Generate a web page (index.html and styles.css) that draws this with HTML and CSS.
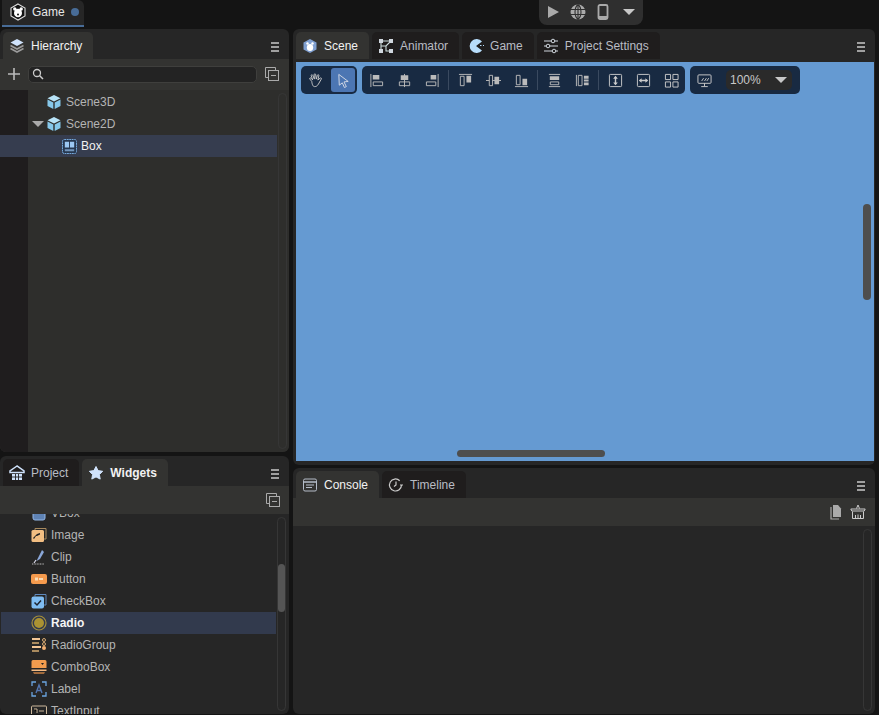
FILE: index.html
```html
<!DOCTYPE html>
<html lang="en">
<head>
  <meta charset="UTF-8" />
  <meta name="viewport" content="width=device-width, initial-scale=1.0"/>
  <title>Game</title>
  <link rel="stylesheet" href="styles.css">
</head>
<body>
  <div class="topbar">
    <div class="doc-tab">
      <svg class="ic18" viewBox="0 0 18 18"><path d="M9 1l7 4v8l-7 4-7-4V5z" fill="#111" stroke="#ddd" stroke-width="1.1"/><circle cx="5.8" cy="6" r="1.7" fill="#fff"/><circle cx="12.2" cy="6" r="1.7" fill="#fff"/><ellipse cx="9" cy="10" rx="4" ry="4.3" fill="#fff"/><circle cx="9" cy="11.5" r="1" fill="#111"/></svg>
      <span>Game</span>
      <i class="dot"></i>
    </div>
    <div class="run-group">
      <svg class="ic16" viewBox="0 0 16 16"><path d="M3 2l11 6-11 6z" fill="#aaa"/></svg>
      <svg class="ic16" viewBox="0 0 16 16"><circle cx="8" cy="8" r="7.5" fill="#aaa"/><path d="M0 5.5h16M0 10.500h16M8 0v16M8 .5C4 4 4 12 8 15.500M8 .5c4 3.500 4 11.500 0 15" fill="none" stroke="#2f2f2f" stroke-width="1.100"/></svg>
      <svg class="ic16" viewBox="0 0 16 16"><rect x="3.500" y="1" width="9" height="14" rx="1.500" fill="none" stroke="#aaa" stroke-width="1.800"/><path d="M4 12h8v3H4z" fill="#aaa"/></svg>
      <i class="caret big"></i>
    </div>
  </div>

  <div class="workspace">
    <div class="col-left">
      <section class="panel hierarchy">
        <div class="tabs">
          <div class="tab active">
            <svg class="ic16" viewBox="0 0 16 16"><path d="M8 1l6.500 3.500L8 8 1.500 4.500z" fill="#cfe2fb"/><path d="M1.500 7.500L8 11l6.500-3.500M1.500 10.500L8 14l6.500-3.500" fill="none" stroke="#9a9a9a" stroke-width="1.600"/></svg>
            <span>Hierarchy</span>
          </div>
          <div class="menu"><i></i><i></i><i></i></div>
        </div>
        <div class="toolbar search-bar">
          <svg class="plus" viewBox="0 0 12 12"><path d="M6 0v12M0 6h12" stroke="#bbb" stroke-width="1.600"/></svg>
          <div class="search">
            <svg viewBox="0 0 12 12"><circle cx="5" cy="5" r="3.500" fill="none" stroke="#ccc" stroke-width="1.300"/><path d="M7.500 7.500l3.500 3.500" stroke="#ccc" stroke-width="1.500"/></svg>
          </div>
          <svg class="collapse" viewBox="0 0 14 14"><path d="M3.500 10.500H.5V.5h10v3" fill="none" stroke="#aaa"/><rect x="3.500" y="3.500" width="10" height="10" fill="none" stroke="#aaa"/><path d="M6 8.500h5" stroke="#aaa"/></svg>
        </div>
        <div class="tree">
          <div class="gutter"></div>
          <div class="tree-row"><svg class="cube" viewBox="0 0 16 16"><use href="#cube"/></svg><span>Scene3D</span></div>
          <div class="tree-row"><i class="caret small"></i><svg class="cube" viewBox="0 0 16 16"><use href="#cube"/></svg><span>Scene2D</span></div>
          <div class="tree-row selected">
            <svg class="box" viewBox="0 0 16 16"><rect x=".5" y=".5" width="15" height="15" rx="2" fill="#26374f" stroke="#7db4ea" stroke-dasharray="2 .6"/><path d="M3 3h4.500v6H3zM8.500 3H13v6H8.500z" fill="#9cc8f2"/><path d="M3 11h10v2H3z" fill="#7296bd"/></svg>
            <span>Box</span>
          </div>
          <div class="vscroll"></div>
        </div>
      </section>

      <section class="panel widgets">
        <div class="tabs">
          <div class="tab">
            <svg class="ic16" viewBox="0 0 16 16"><path d="M8 1L1 6v1.500h14V6z" fill="none" stroke="#cfe2fb" stroke-width="1.500"/><path d="M3 9h10v6H3z" fill="#cfe2fb"/><path d="M6.500 9v6M9.500 9v6M3 12h10" stroke="#222" stroke-width=".9"/></svg>
            <span>Project</span>
          </div>
          <div class="tab active bold">
            <svg class="ic16" viewBox="0 0 16 16"><path d="M8 1.500l2.100 4.100 4.600.7-3.300 3.200.8 4.600L8 11.900l-4.200 2.200.8-4.600L1.300 6.300l4.600-.7z" fill="#cfe2fb" stroke="#cfe2fb" stroke-linejoin="round"/></svg>
            <span>Widgets</span>
          </div>
          <div class="menu"><i></i><i></i><i></i></div>
        </div>
        <div class="toolbar end">
          <svg class="collapse" viewBox="0 0 14 14"><path d="M3.500 10.500H.5V.5h10v3" fill="none" stroke="#aaa"/><rect x="3.500" y="3.500" width="10" height="10" fill="none" stroke="#aaa"/><path d="M6 8.500h5" stroke="#aaa"/></svg>
        </div>
        <div class="list">
          <div class="list-inner">
            <div class="list-row"><svg class="ic16" viewBox="0 0 16 16"><rect x="2" y="1" width="12" height="14" rx="2" fill="#5f83b5" stroke="#93b7e6"/></svg><span>VBox</span></div>
            <div class="list-row"><svg class="ic16" viewBox="0 0 16 16"><path d="M4 3V1.500h11V12h-2" fill="none" stroke="#a98a5e"/><rect x=".5" y="3" width="12.500" height="12" rx="1.500" fill="#f2be82"/><path d="M2 11l4-4 3-1v1.500L6 9H5l-2 3z" fill="#222"/></svg><span>Image</span></div>
            <div class="list-row"><svg class="ic16" viewBox="0 0 16 16"><path d="M11 1l2 2-4 7-3.500 2z" fill="#8aa7d8"/><path d="M5 11l-2 3" stroke="#dde" stroke-width="1.200"/><path d="M1 15h12" stroke="#bbb" stroke-dasharray="1 .6"/></svg><span>Clip</span></div>
            <div class="list-row"><svg class="ic16" viewBox="0 0 16 16"><rect y="3" width="16" height="10" rx="2" fill="#f49a4d"/><path d="M4 6.500h3v3H4zM8 7h4v2H8z" fill="#f9dcb6"/></svg><span>Button</span></div>
            <div class="list-row"><svg class="ic16" viewBox="0 0 16 16"><path d="M4 3.500V1.500h11V12h-2" fill="none" stroke="#5e89bd"/><rect x=".5" y="3.500" width="12.500" height="12" rx="2" fill="#7fbdf2"/><path d="M3.500 9.500l2.500 2.500 4-4.500" fill="none" stroke="#1c2430" stroke-width="1.500"/></svg><span>CheckBox</span></div>
            <div class="list-row selected bold"><svg class="ic16" viewBox="0 0 16 16"><circle cx="8" cy="8" r="7" fill="none" stroke="#a48e3a" stroke-width="1.200"/><circle cx="8" cy="8" r="5" fill="#ab9232"/></svg><span>Radio</span></div>
            <div class="list-row"><svg class="ic16" viewBox="0 0 16 16"><path d="M1 1h8v2H1zM1 9h9v2H1z" fill="#f3c695"/><path d="M1 5h7v2H1zM1 13h7v2H1z" fill="#a98a5e"/><circle cx="13" cy="3" r="1.500" fill="none" stroke="#d8aa72"/><circle cx="13" cy="7" r="1.500" fill="none" stroke="#d8aa72"/><circle cx="13" cy="11" r="2" fill="#f3b071"/></svg><span>RadioGroup</span></div>
            <div class="list-row"><svg class="ic16" viewBox="0 0 16 16"><path d="M2 1h12a1.500 1.500 0 011.500 1.500V9H.5V2.500A1.500 1.500 0 012 1z" fill="#f29c4e"/><path d="M.5 10.500h15v1.500H.5z" fill="#f4bb84"/><path d="M2 13h12l-1 2H3z" fill="#a06a3c"/><path d="M10 4h3l-1.500 2z" fill="#222"/></svg><span>ComboBox</span></div>
            <div class="list-row"><svg class="ic16" viewBox="0 0 16 16"><path d="M1 5V1h4M11 1h4v4M15 11v4h-4M5 15H1v-4" fill="none" stroke="#6ba5e0" stroke-width="1.300"/><path d="M5 12l3-8 3 8M6.200 9.500h3.600" fill="none" stroke="#5476b0" stroke-width="1.400"/></svg><span>Label</span></div>
            <div class="list-row"><svg class="ic16" viewBox="0 0 16 16"><rect x=".5" y="3" width="15" height="10" rx="1" fill="none" stroke="#cdb89c"/><path d="M3 6h3v4M8 8h5" stroke="#cdb89c"/></svg><span>TextInput</span></div>
          </div>
          <div class="vscroll"><div class="thumb"></div></div>
        </div>
      </section>
    </div>

    <div class="col-right">
      <section class="panel scene">
        <div class="tabs">
          <div class="tab active">
            <svg class="ic16" viewBox="0 0 16 16"><path d="M8 1l6.500 3.500v7L8 15l-6.500-3.500v-7z" fill="#7f9fd0"/><circle cx="5.500" cy="5.500" r="1.200" fill="#fff"/><circle cx="10.500" cy="5.500" r="1.200" fill="#fff"/><ellipse cx="8" cy="9.500" rx="3.200" ry="3.500" fill="#fff"/></svg>
            <span>Scene</span>
          </div>
          <div class="tab">
            <svg class="ic16" viewBox="0 0 16 16"><path d="M3 3h10M3 3v10M13 3l-5 5H3M8 8v5h5" fill="none" stroke="#cdd" stroke-width="1.100"/><path d="M1 1h4v4H1zM11 1h4v4h-4zM1 11h4v4H1zM11 11h4v4h-4z" fill="#cfd6dd"/></svg>
            <span>Animator</span>
          </div>
          <div class="tab">
            <svg class="ic16" viewBox="0 0 16 16"><path d="M14 3.500A7 7 0 1014 12.500L8 8z" fill="#b7dcfa"/><path d="M12 7.500h1.500M15 7.500h1" stroke="#b7dcfa"/></svg>
            <span>Game</span>
          </div>
          <div class="tab">
            <svg class="ic16" viewBox="0 0 16 16"><path d="M1 3h14M1 8h14M1 13h14" stroke="#cfd6dd" stroke-width="1.200"/><circle cx="10" cy="3" r="1.800" fill="#221f1f" stroke="#cfd6dd"/><circle cx="5" cy="8" r="1.800" fill="#221f1f" stroke="#cfd6dd"/><circle cx="11" cy="13" r="1.800" fill="#221f1f" stroke="#cfd6dd"/></svg>
            <span>Project Settings</span>
          </div>
          <div class="menu"><i></i><i></i><i></i></div>
        </div>
        <div class="stage">
          <div class="stage-tools">
            <div class="tool-group">
              <button class="tool"><svg viewBox="0 0 16 16"><path d="M4 9L2 6.500c-.8-1 .5-1.800 1.200-1L5 7.500 3.500 3c-.4-1.200 1.200-1.600 1.600-.5L6.800 6.500 6.500 1.800c0-1.200 1.700-1.200 1.700 0l.6 4.700L10 2.500c.3-1.100 1.800-.8 1.600.4L10.500 7.500l2.400-2c1-.8 1.900.2 1.200 1.100L11 12c-1 1.600-2 2.500-4 2.500-1.500 0-2.500-1.500-3-5.500z" fill="none" stroke="#ccc"/></svg></button>
              <button class="tool on"><svg viewBox="0 0 16 16"><path d="M3 1.500l10 7.500-4.500.5L11 14.500l-2 1-2.300-5L3.500 13z" fill="none" stroke="#d5dbe6"/></svg></button>
            </div>
            <div class="tool-group">
              <button class="tool"><svg viewBox="0 0 16 16"><path d="M2 1v14" stroke="#bbb"/><path d="M4 2h7v5H4z" fill="#bbb"/><path d="M4.500 9.500h10v4h-10z" fill="none" stroke="#bbb"/></svg></button>
              <button class="tool"><svg viewBox="0 0 16 16"><path d="M8 1v14" stroke="#bbb"/><path d="M4 2.500h8v5H4z" fill="#bbb"/><path d="M2.500 9.500h11v4h-11z" fill="none" stroke="#bbb"/></svg></button>
              <button class="tool"><svg viewBox="0 0 16 16"><path d="M14 1v14" stroke="#bbb"/><path d="M6 2h6v5H6z" fill="#bbb"/><path d="M1.500 9.500h10v4h-10z" fill="none" stroke="#bbb"/></svg></button>
              <i class="sep"></i>
              <button class="tool"><svg viewBox="0 0 16 16"><path d="M1 1.500h14" stroke="#bbb"/><path d="M2.500 3.500h4v10h-4z" fill="none" stroke="#bbb"/><path d="M9 3h5v7H9z" fill="#bbb"/></svg></button>
              <button class="tool"><svg viewBox="0 0 16 16"><path d="M0 8h16" stroke="#bbb"/><path d="M3.500 2.500h3.500v11H3.500z" fill="#1a2a40" stroke="#bbb"/><path d="M9 4h5v8H9z" fill="#bbb"/></svg></button>
              <button class="tool"><svg viewBox="0 0 16 16"><path d="M1 14.500h14" stroke="#bbb"/><path d="M2.500 2.500h4v10h-4z" fill="none" stroke="#bbb"/><path d="M9 6h5v7H9z" fill="#bbb"/></svg></button>
              <i class="sep"></i>
              <button class="tool"><svg viewBox="0 0 16 16"><path d="M2 1.500h12M2 14.500h12" stroke="#bbb"/><path d="M3 3.500h10v4H3z" fill="#bbb"/><path d="M3.500 9.500h9v3h-9z" fill="none" stroke="#bbb"/></svg></button>
              <button class="tool"><svg viewBox="0 0 16 16"><path d="M1.500 2v12" stroke="#bbb"/><path d="M3.500 2.500h4v11h-4z" fill="none" stroke="#bbb"/><path d="M9.500 3h5v3h-5zM9.500 7h5v2h-5zM9.500 10h5v3h-5z" fill="#bbb"/></svg></button>
              <i class="sep"></i>
              <button class="tool"><svg viewBox="0 0 16 16"><rect x="1.500" y="1.500" width="13" height="13" rx="1" fill="none" stroke="#ccc"/><path d="M8 4v8" stroke="#ccc" stroke-width="1.500"/><path d="M5.500 6L8 3l2.500 3zM5.500 10L8 13l2.500-3z" fill="#ccc"/></svg></button>
              <button class="tool"><svg viewBox="0 0 16 16"><rect x="1.500" y="1.500" width="13" height="13" rx="1" fill="none" stroke="#ccc"/><path d="M4 8h8" stroke="#ccc" stroke-width="1.500"/><path d="M6 5.500L3 8l3 2.500zM10 5.500L13 8l-3 2.500z" fill="#ccc"/></svg></button>
              <button class="tool"><svg viewBox="0 0 16 16"><path d="M1.500 1.500h5.500v5.500H1.500zM9.500 1.500h5.500v5.500H9.500zM1.500 9.500h5.500v5.500H1.500zM9.500 9.500h5.500v5.500H9.500z" fill="none" stroke="#ccc"/></svg></button>
            </div>
            <div class="tool-group">
              <button class="tool"><svg viewBox="0 0 16 16"><rect x="1" y="2" width="14" height="9" rx="1" fill="none" stroke="#ccc"/><path d="M8 11v3M4.500 14.500h7M5 8.500l2-3M8 8.500l2-3M10.500 8.500l2-3" stroke="#ccc"/></svg></button>
              <div class="zoom-select"><span>100%</span><i class="caret big"></i></div>
            </div>
          </div>
          <div class="stage-vbar"></div>
          <div class="stage-hbar"></div>
        </div>
      </section>

      <section class="panel console">
        <div class="tabs">
          <div class="tab active">
            <svg class="ic16" viewBox="0 0 16 16"><rect x="1.500" y="2" width="13" height="12" rx="1.500" fill="none" stroke="#b5bcc8"/><path d="M2 5h12" stroke="#b5bcc8" stroke-width="1.600"/><path d="M4 8h8M4 10.500h6" stroke="#b5bcc8"/></svg>
            <span>Console</span>
          </div>
          <div class="tab">
            <svg class="ic16" viewBox="0 0 16 16"><path d="M13.500 8a6 6 0 11-1.800-4.300" fill="none" stroke="#ccc" stroke-width="1.200"/><path d="M8 4.500V8l-2 1.500M12 8h3" fill="none" stroke="#ccc" stroke-width="1.200"/></svg>
            <span>Timeline</span>
          </div>
          <div class="menu"><i></i><i></i><i></i></div>
        </div>
        <div class="toolbar end">
          <svg class="doc" viewBox="0 0 14 16"><path d="M2 3v12h8" fill="none" stroke="#aaa" stroke-width="1.200"/><path d="M4 1h5l3 3.500V13H4z" fill="#aaa"/></svg>
          <svg class="broom" viewBox="0 0 16 16"><path d="M6.500 4.500L8 1l1.500 3.500" fill="none" stroke="#ccc"/><path d="M.8 5h14.400l-1 2H1.800z" fill="none" stroke="#ccc"/><path d="M2.500 7.500v7h11v-7M5.500 11v3.500M8 10.500v4M10.500 11v3.500" fill="none" stroke="#ccc"/></svg>
        </div>
        <div class="console-body"><div class="vscroll"></div></div>
      </section>
    </div>
  </div>

  <svg class="defs" width="0" height="0">
    <symbol id="cube" viewBox="0 0 16 16">
      <path d="M8 1l6.500 3.300L8 7.600 1.500 4.300z" fill="#b7e3f7"/>
      <path d="M1.500 5.500L7.300 8.600V15L1.500 12z" fill="#86c8ea"/>
      <path d="M14.500 5.500L8.700 8.600V15l5.800-3z" fill="#86c8ea"/>
    </symbol>
  </svg>
</body>
</html>
```

FILE: styles.css
```css
* {
  box-sizing: border-box;
}
html, body {
  height: 100%;
}
body {
  margin: 0;
  background: #141414;
  color: #b4b4b4;
  font-family: "Liberation Sans", Arial, sans-serif;
  font-size: 12px;
  overflow: hidden;
  display: flex;
  flex-direction: column;
}
svg {
  display: block;
  flex: none;
}
.defs {
  position: absolute;
}
.ic16 {
  width: 16px;
  height: 16px;
}
.ic18 {
  width: 18px;
  height: 18px;
}

.topbar {
  height: 29px;
  flex: none;
  position: relative;
  padding-left: 2px;
}
.doc-tab {
  width: 82px;
  height: 27px;
  background: #262626;
  border-bottom: 2px solid #486c97;
  border-radius: 0 6px 0 0;
  display: flex;
  align-items: center;
  padding: 0 0 2px 7px;
  color: #e6e6e6;
}
.doc-tab span {
  margin-left: 5px;
}
.dot {
  width: 8px;
  height: 8px;
  border-radius: 50%;
  background: #486c97;
  margin-left: 6px;
}
.run-group {
  position: absolute;
  left: 539px;
  top: 0;
  width: 104px;
  height: 25px;
  background: #2f2f2f;
  border-radius: 0 0 8px 8px;
  display: flex;
  align-items: center;
  padding: 0 0 2px 6px;
  gap: 9px;
}
.caret {
  display: block;
  width: 0;
  height: 0;
  border-style: solid;
  border-color: #c8c8c8 transparent transparent;
}
.caret.big {
  border-width: 6px 6px 0;
}
.run-group .caret {
  margin-left: 3px;
}
.caret.small {
  border-width: 6px 6px 0;
  position: absolute;
  left: 32px;
  top: 8px;
  border-top-color: #aaa;
}

.workspace {
  flex: 1;
  min-height: 0;
  display: flex;
  gap: 4px;
  padding-bottom: 1px;
}
.col-left {
  width: 289px;
  flex: none;
  display: flex;
  flex-direction: column;
  gap: 4px;
}
.col-right {
  flex: 1;
  min-width: 0;
  display: flex;
  flex-direction: column;
  gap: 3px;
  padding-right: 4px;
}
.panel {
  background: #262626;
  border-radius: 6px;
  display: flex;
  flex-direction: column;
  overflow: hidden;
}
.hierarchy {
  height: 423px;
  flex: none;
}
.widgets {
  flex: 1;
  min-height: 0;
}
.scene {
  height: 436px;
  flex: none;
}
.console {
  flex: 1;
  min-height: 0;
}

.tabs {
  height: 30px;
  flex: none;
  display: flex;
  align-items: flex-end;
  padding-left: 3px;
  gap: 3px;
}
.tab {
  height: 27px;
  display: flex;
  align-items: center;
  padding: 0 11px 0 6px;
  gap: 6px;
  background: #1f1d1d;
  border-radius: 5px 5px 0 0;
  color: #b9bcc4;
}
.tab.active {
  background: #333331;
  color: #f2f2f2;
}
.tab.bold span {
  font-weight: bold;
}
.menu {
  margin: 0 10px 7px auto;
  width: 8px;
  display: flex;
  flex-direction: column;
  gap: 2px;
}
.menu i {
  display: block;
  height: 2px;
  background: #a0a0a0;
}

.toolbar {
  height: 31px;
  flex: none;
  background: #333331;
  display: flex;
  align-items: center;
}
.toolbar.end {
  height: 28px;
  justify-content: flex-end;
  padding-right: 9px;
}
.search-bar {
  padding: 0 8px 1px 8px;
}
.plus {
  width: 12px;
  height: 12px;
}
.search {
  width: 229px;
  height: 17px;
  margin: 0 8px;
  background: #232323;
  border: 1px solid #3f3f3d;
  border-radius: 5px;
  display: flex;
  align-items: center;
  padding-left: 3px;
}
.search svg {
  width: 12px;
  height: 12px;
}
.collapse {
  width: 14px;
  height: 14px;
}

.tree {
  flex: 1;
  min-height: 0;
  background: #2e2e2c;
  padding-top: 1px;
  position: relative;
}
.gutter {
  position: absolute;
  left: 0;
  top: 0;
  bottom: 0;
  width: 28px;
  background: #1f1d1e;
}
.tree-row {
  height: 22px;
  position: relative;
  width: 277px;
  display: flex;
  align-items: center;
  padding-left: 46px;
  gap: 4px;
}
.tree-row.selected {
  background: #363d4f;
  color: #f2f2f2;
  padding-left: 62px;
}
.cube {
  width: 16px;
  height: 16px;
}
.box {
  width: 15px;
  height: 15px;
}

.list {
  flex: 1;
  min-height: 0;
  position: relative;
  overflow: hidden;
}
.list-inner {
  margin-top: -12px;
  padding-left: 1px;
}
.list-row {
  height: 22px;
  width: 275px;
  display: flex;
  align-items: center;
  padding-left: 30px;
  gap: 4px;
}
.list-row.selected {
  background: #323a4d;
  color: #f5f5f5;
}
.list-row.bold span {
  font-weight: bold;
}

.vscroll {
  position: absolute;
  right: 3px;
  top: 3px;
  bottom: 3px;
  width: 9px;
  border: 1px solid #363636;
  border-radius: 5px;
}
.tree .vscroll {
  right: 2px;
}
.thumb {
  position: absolute;
  left: 0;
  right: 0;
  top: 46px;
  height: 48px;
  background: #555;
  border-radius: 4px;
}

.stage {
  flex: 1;
  margin: 3px 1px 4px 3px;
  background: #659ad2;
  position: relative;
  padding: 4px 0 0 5px;
}
.stage-tools {
  display: flex;
  gap: 5px;
}
.tool-group {
  height: 28px;
  padding: 0 2px;
  background: #182a42;
  border-radius: 5px;
  display: flex;
  align-items: center;
  gap: 4px;
}
.tool {
  width: 24px;
  height: 24px;
  padding: 0;
  border: none;
  border-radius: 3px;
  background: none;
  display: flex;
  align-items: center;
  justify-content: center;
}
.tool svg {
  width: 15px;
  height: 15px;
}
.tool.on {
  background: #4c76b3;
}
.sep {
  width: 1px;
  height: 20px;
  background: #3a4a60;
}
.zoom-select {
  width: 66px;
  height: 20px;
  margin-left: 6px;
  margin-right: 6px;
  background: #2a2a2a;
  border-radius: 5px;
  display: flex;
  align-items: center;
  justify-content: space-between;
  padding: 0 5px 0 4px;
  color: #c8c8c8;
}
.stage-vbar {
  position: absolute;
  right: 3px;
  top: 142px;
  width: 8px;
  height: 96px;
  background: #4e4e4e;
  border-radius: 4px;
}
.stage-hbar {
  position: absolute;
  left: 161px;
  bottom: 4px;
  width: 148px;
  height: 7px;
  background: #4e4e4e;
  border-radius: 4px;
}

.doc {
  width: 14px;
  height: 16px;
  margin-right: 7px;
}
.broom {
  width: 16px;
  height: 16px;
}
.console-body {
  flex: 1;
  position: relative;
}
```
